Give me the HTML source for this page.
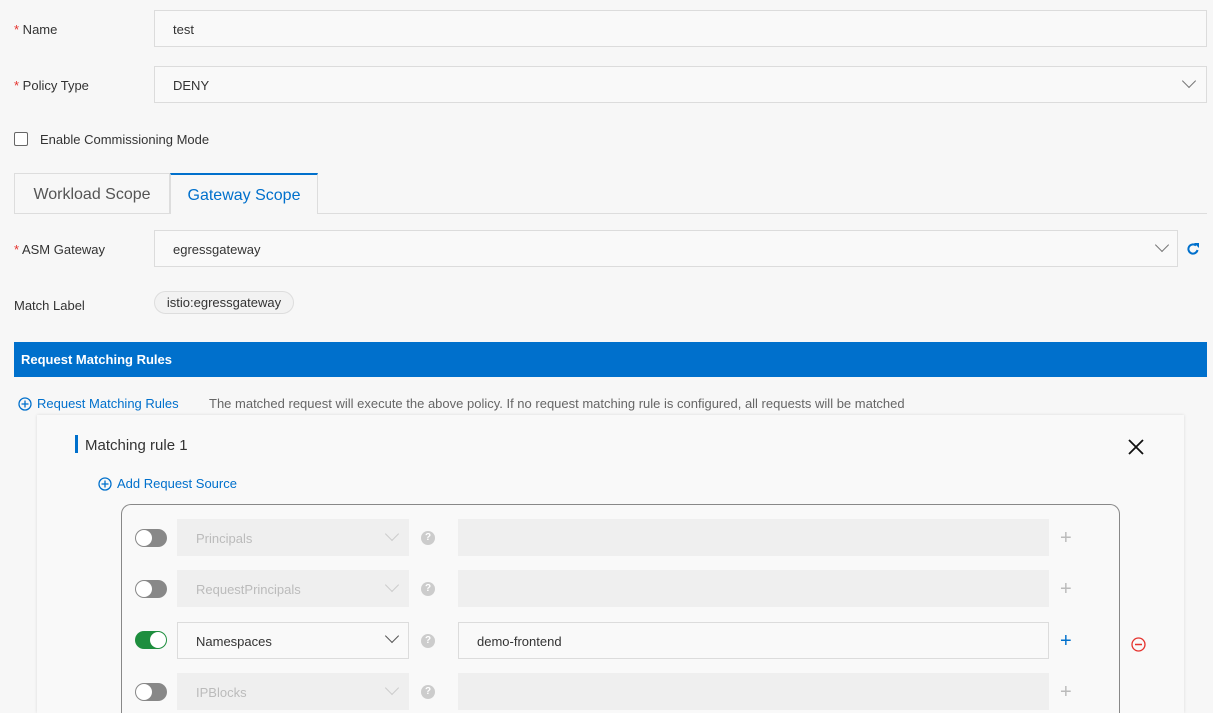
<!DOCTYPE html><html style="overflow:hidden;height:713px"><head><style>
body{margin:0;width:1213px;height:713px;overflow:hidden;background:#f7f7f7;font-family:"Liberation Sans",sans-serif;font-size:13px;color:#333;position:relative}
.a{position:absolute}
.lbl{position:absolute;left:14px;font-size:13px;color:#333}
.lbl b{color:#e5322d;font-weight:normal}
.inp{position:absolute;background:#f9f9f9;border:1px solid #dcdcdc;box-sizing:border-box;padding-left:18px;padding-top:2px;font-size:13px;color:#333;display:flex;align-items:center}
.chev{position:absolute;width:9px;height:9px;border-right:1.5px solid #777;border-bottom:1.5px solid #777;transform:rotate(45deg)}
.tog{position:absolute;left:135px;width:32px;height:18px;border-radius:9px;background:#888;box-sizing:border-box}
.tog i{position:absolute;left:1px;top:1px;width:16px;height:16px;border-radius:50%;background:#fff}
.q{position:absolute;left:421px;width:14px;height:14px;border-radius:50%;background:#ccc;color:#fff;font-size:10px;font-weight:bold;text-align:center;line-height:14px}
.pl{position:absolute;left:1060px;font-size:20px;color:#bbb;line-height:20px}
</style></head><body>
<div class="lbl" style="top:22px"><b>*</b> Name</div>
<div class="inp" style="left:154px;top:10px;width:1053px;height:37px">test</div>
<div class="lbl" style="top:78px"><b>*</b> Policy Type</div>
<div class="inp" style="left:154px;top:66px;width:1053px;height:37px">DENY</div>
<div class="chev" style="left:1184px;top:76px"></div>
<div class="a" style="left:14px;top:132px;width:14px;height:14px;border:1px solid #666;border-radius:2px;box-sizing:border-box;background:#fff"></div>
<div class="a" style="left:40px;top:132px">Enable Commissioning Mode</div>
<div class="a" style="left:14px;top:213px;width:1193px;height:1px;background:#ddd"></div>
<div class="a" style="left:14px;top:173px;width:156px;height:41px;border:1px solid #ddd;box-sizing:border-box;background:#f7f7f7;font-size:16px;color:#555;text-align:center;line-height:42px">Workload Scope</div>
<div class="a" style="left:170px;top:173px;width:148px;height:41px;border:1px solid #ddd;border-top:2px solid #0070cc;border-bottom:none;box-sizing:border-box;background:#f7f7f7;font-size:16px;color:#0070cc;text-align:center;line-height:41px">Gateway Scope</div>
<div class="lbl" style="top:242px"><b>*</b> ASM Gateway</div>
<div class="inp" style="left:154px;top:230px;width:1024px;height:37px">egressgateway</div>
<div class="chev" style="left:1157px;top:240px"></div>
<svg class="a" style="left:1186px;top:242px" width="14" height="14" viewBox="0 0 14 14"><path d="M11.5 8A4.6 4.6 0 1 1 10 3.5" fill="none" stroke="#0070cc" stroke-width="2"/><path d="M8 1h5v5z" fill="#0070cc"/></svg>
<div class="lbl" style="top:298px">Match Label</div>
<div class="a" style="left:154px;top:291px;width:140px;height:23px;border:1px solid #ddd;border-radius:12px;box-sizing:border-box;background:#f2f2f2;text-align:center;line-height:22px">istio:egressgateway</div>
<div class="a" style="left:14px;top:342px;width:1193px;height:35px;background:#0070cc;color:#fff;font-weight:bold;line-height:36px;padding-left:7px;box-sizing:border-box">Request Matching Rules</div>
<svg class="a" style="left:18px;top:397px" width="14" height="14"><circle cx="7" cy="7" r="6" fill="none" stroke="#0070cc" stroke-width="1.3"/><path d="M7 3.5v7M3.5 7h7" stroke="#0070cc" stroke-width="1.3"/></svg>
<div class="a" style="left:37px;top:396px;color:#0070cc">Request Matching Rules</div>
<div class="a" style="left:209px;top:396px;color:#666">The matched request will execute the above policy. If no request matching rule is configured, all requests will be matched</div>
<div class="a" style="left:37px;top:415px;width:1147px;height:298px;background:#f9f9f9;box-shadow:0 0 3px rgba(0,0,0,.12)"></div>
<div class="a" style="left:75px;top:435px;width:3px;height:18px;background:#0070cc"></div>
<div class="a" style="left:85px;top:437px;font-size:15px;color:#333">Matching rule 1</div>
<svg class="a" style="left:1128px;top:439px" width="16" height="16"><path d="M1 1l14 14M15 1L1 15" stroke="#111" stroke-width="1.8"/></svg>
<svg class="a" style="left:98px;top:477px" width="14" height="14"><circle cx="7" cy="7" r="6" fill="none" stroke="#0070cc" stroke-width="1.3"/><path d="M7 3.5v7M3.5 7h7" stroke="#0070cc" stroke-width="1.3"/></svg>
<div class="a" style="left:117px;top:476px;color:#0070cc">Add Request Source</div>
<div class="a" style="left:121px;top:504px;width:999px;height:209px;border:1px solid #888;border-bottom:none;border-radius:10px 10px 0 0;box-sizing:border-box"></div>

<div class="tog" style="top:529px"><i></i></div>
<div class="inp" style="left:177px;top:519px;width:232px;height:37px;background:#efefef;border-color:#efefef;color:#bbb">Principals</div><div class="chev" style="left:387px;top:529px;border-color:#ccc"></div>
<div class="q" style="top:531px">?</div>
<div class="inp" style="left:458px;top:519px;width:591px;height:37px;background:#efefef;border-color:#efefef"></div>
<div class="pl" style="top:528px">+</div>

<div class="tog" style="top:580px"><i></i></div>
<div class="inp" style="left:177px;top:570px;width:232px;height:37px;background:#efefef;border-color:#efefef;color:#bbb">RequestPrincipals</div><div class="chev" style="left:387px;top:580px;border-color:#ccc"></div>
<div class="q" style="top:582px">?</div>
<div class="inp" style="left:458px;top:570px;width:591px;height:37px;background:#efefef;border-color:#efefef"></div>
<div class="pl" style="top:579px">+</div>

<div class="tog" style="top:631px;background:#1e8e3e"><i style="left:15px"></i></div>
<div class="inp" style="left:177px;top:622px;width:232px;height:37px">Namespaces</div><div class="chev" style="left:387px;top:631px;border-color:#555"></div>
<div class="q" style="top:634px">?</div>
<div class="inp" style="left:458px;top:622px;width:591px;height:37px">demo-frontend</div>
<div class="pl" style="top:631px;color:#0070cc">+</div>
<svg class="a" style="left:1131px;top:637px" width="15" height="15"><circle cx="7.5" cy="7.5" r="6.5" fill="none" stroke="#e5322d" stroke-width="1.3"/><path d="M4 7.5h7" stroke="#e5322d" stroke-width="1.5"/></svg>

<div class="tog" style="top:683px"><i></i></div>
<div class="inp" style="left:177px;top:673px;width:232px;height:37px;background:#efefef;border-color:#efefef;color:#bbb">IPBlocks</div><div class="chev" style="left:387px;top:683px;border-color:#ccc"></div>
<div class="q" style="top:685px">?</div>
<div class="inp" style="left:458px;top:673px;width:591px;height:37px;background:#efefef;border-color:#efefef"></div>
<div class="pl" style="top:682px">+</div>
</body></html>
